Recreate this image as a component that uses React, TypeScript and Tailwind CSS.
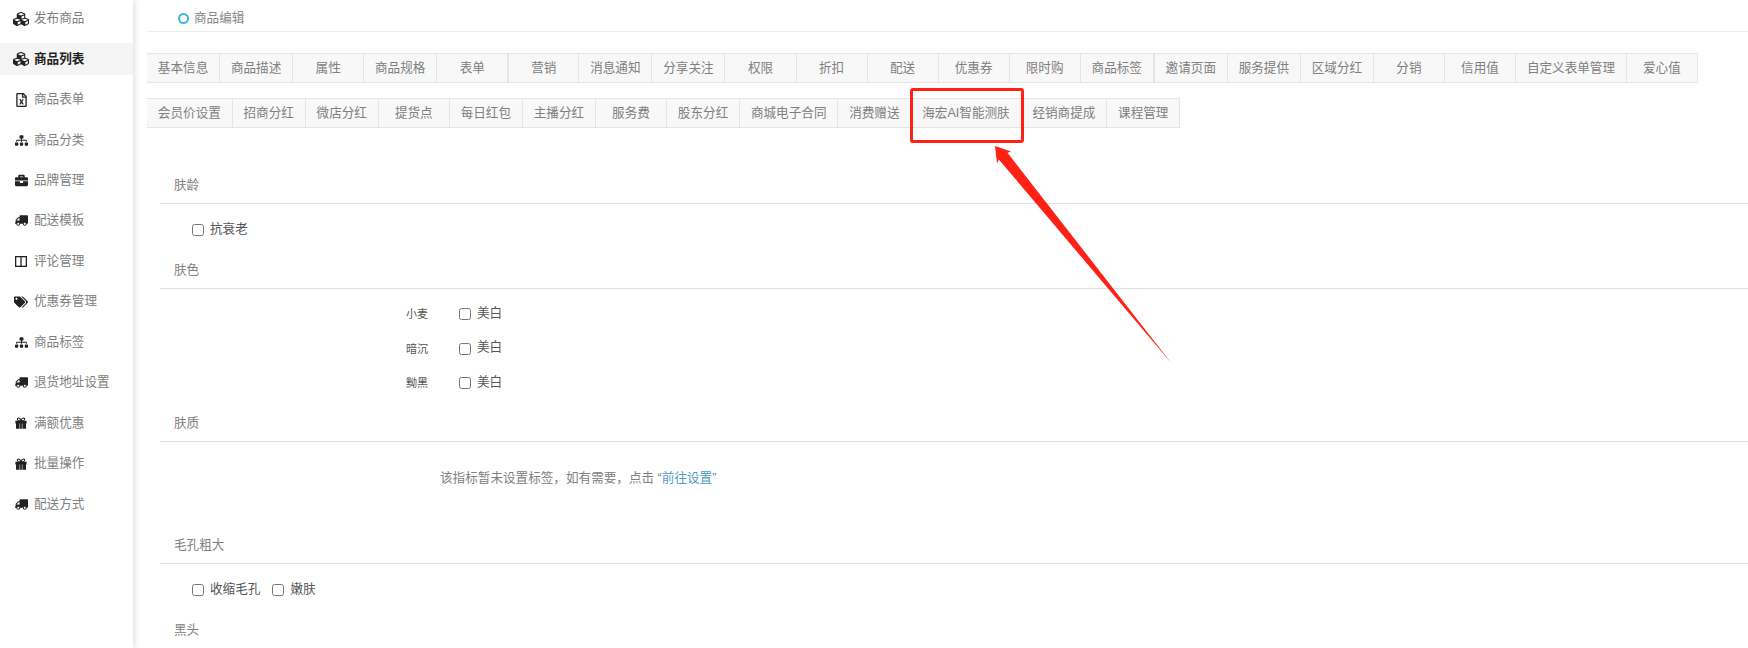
import {
  FaBriefcase,
  FaCubes,
  FaRegFileExcel,
  FaSitemap,
  FaTags,
  FaTruck,
} from "react-icons/fa";

function GiftIcon() {
  return (
    <svg className="h-[12px] w-[12px]" viewBox="0 0 12 12" fill="currentColor">
      <path
        fillRule="evenodd"
        d="M3.6 0.4C2.5 0.4 1.8 1.2 1.8 2.1C1.8 3 2.4 3.5 3 3.7H0.4V6.6H1V11.8H4.6V6.6H7.4V11.8H11V6.6H11.6V3.7H9C9.6 3.5 10.2 3 10.2 2.1C10.2 1.2 9.5 0.4 8.4 0.4C7.2 0.4 6.4 1.4 6 2.4C5.6 1.4 4.8 0.4 3.6 0.4ZM3.6 1.5C4.3 1.5 4.8 2.4 5.1 3.2H3.7C3.2 3.2 2.9 2.7 2.9 2.3C2.9 1.9 3.2 1.5 3.6 1.5ZM8.4 1.5C8.8 1.5 9.1 1.9 9.1 2.3C9.1 2.7 8.8 3.2 8.3 3.2H6.9C7.2 2.4 7.7 1.5 8.4 1.5Z"
      />
      <path d="M5.1 3.7H6.9V11.8H5.1Z" />
    </svg>
  );
}

function ColumnsIcon() {
  return (
    <svg className="h-[11px] w-[12px]" viewBox="0 0 12 11" fill="none" stroke="currentColor" strokeWidth="1.3">
      <rect x="0.65" y="0.65" width="10.7" height="9.7" />
      <path d="M6 0.65V10.35" />
    </svg>
  );
}

const menu = [
  { label: "发布商品", icon: <FaCubes className="h-4 w-4" /> },
  { label: "商品列表", icon: <FaCubes className="h-4 w-4" />, active: true },
  { label: "商品表单", icon: <FaRegFileExcel className="h-[14px] w-[11px]" /> },
  { label: "商品分类", icon: <FaSitemap className="h-[13px] w-[13px]" /> },
  { label: "品牌管理", icon: <FaBriefcase className="h-[13px] w-[13px]" /> },
  { label: "配送模板", icon: <FaTruck className="h-[13px] w-[13px] -scale-x-100" /> },
  { label: "评论管理", icon: <ColumnsIcon /> },
  { label: "优惠券管理", icon: <FaTags className="h-[14px] w-[14px]" /> },
  { label: "商品标签", icon: <FaSitemap className="h-[13px] w-[13px]" /> },
  { label: "退货地址设置", icon: <FaTruck className="h-[13px] w-[13px] -scale-x-100" /> },
  { label: "满额优惠", icon: <GiftIcon /> },
  { label: "批量操作", icon: <GiftIcon /> },
  { label: "配送方式", icon: <FaTruck className="h-[13px] w-[13px] -scale-x-100" /> },
];

const tabs = [
  "基本信息", "商品描述", "属性", "商品规格", "表单", "营销", "消息通知", "分享关注", "权限", "折扣",
  "配送", "优惠券", "限时购", "商品标签", "邀请页面", "服务提供", "区域分红", "分销", "信用值",
  "自定义表单管理", "爱心值", "会员价设置", "招商分红", "微店分红", "提货点", "每日红包", "主播分红",
  "服务费", "股东分红", "商城电子合同", "消费赠送", "海宏AI智能测肤", "经销商提成", "课程管理",
];

function SectionTitle({ title }: { title: string }) {
  return (
    <div className="flex h-[37px] items-center border-b border-[#ddd] pl-[14px] text-[12.6px] text-[#808080]">
      {title}
    </div>
  );
}

function Check({ label }: { label: string }) {
  return (
    <label className="flex items-center text-[12.6px] text-[#555]">
      <input type="checkbox" className="h-[12px] w-[12px]" />
      <span className="ml-[6px] -translate-y-px">{label}</span>
    </label>
  );
}

function SkinRow({ name }: { name: string }) {
  return (
    <div className="flex h-[34.5px] items-center">
      <span className="w-[53px] text-[11px] text-[#555]">{name}</span>
      <Check label="美白" />
    </div>
  );
}

export default function App() {
  return (
    <div className="relative flex h-[648px] overflow-hidden bg-white font-['Liberation_Sans','Noto_Sans_CJK_SC',sans-serif]">
      <aside className="flex h-full w-[133px] shrink-0 flex-col gap-[8.47px] bg-white pt-[2.6px] shadow-[2px_0_6px_rgba(0,0,0,0.12)]">
        {menu.map((item) => (
          <div
            key={item.label}
            className={`flex h-[32px] shrink-0 items-center text-[12.6px] ${
              item.active ? "bg-[#f5f5f5] font-bold text-[#222]" : "text-[#808080]"
            }`}
          >
            <span className="flex w-[34px] shrink-0 justify-center pl-[8px] text-[#222]">{item.icon}</span>
            <span className="whitespace-nowrap">{item.label}</span>
          </div>
        ))}
      </aside>

      <main className="min-w-0 flex-1 pl-[14px]">
        <div className="flex h-[32px] items-center border-b border-[#eee] pt-[5px] pl-[31px] text-[12.6px] text-[#888]">
          <span className="mr-[5px] h-[11px] w-[11px] rounded-full border-2 border-[#3db5d8]" />
          商品编辑
        </div>

        <div className="mt-[21px] flex flex-wrap gap-y-[15px]">
          {tabs.map((tab) => (
            <div
              key={tab}
              className={`flex h-[30px] min-w-[71.05px] items-center justify-center border-y border-r border-[#e5e5e5] bg-[#f8f8f8] px-[10.85px] text-[12.6px] whitespace-nowrap text-[#808080] ${
                tab === "营销" || tab === "邀请页面" ? "border-l" : ""
              }`}
            >
              {tab}
            </div>
          ))}
        </div>

        <section className="mt-[39px] pl-[13px]">
          <SectionTitle title="肤龄" />
          <div className="flex h-[48px] items-center pt-[5px] pl-[32px]">
            <Check label="抗衰老" />
          </div>

          <SectionTitle title="肤色" />
          <div className="h-[116px] pt-[8px] pl-[246px]">
            <SkinRow name="小麦" />
            <SkinRow name="暗沉" />
            <SkinRow name="黝黑" />
          </div>

          <SectionTitle title="肤质" />
          <div className="h-[85px] pt-[26px] pl-[280px] text-[12.6px] leading-5 text-[#808080]">
            该指标暂未设置标签，如有需要，点击 “<span className="text-[#4c9cc4]">前往设置</span>”
          </div>

          <SectionTitle title="毛孔粗大" />
          <div className="flex h-[48px] items-center gap-[12px] pt-[5px] pl-[32px]">
            <Check label="收缩毛孔" />
            <Check label="嫩肤" />
          </div>

          <SectionTitle title="黑头" />
        </section>
      </main>

      {/* red annotation over the screenshot */}
      <div className="absolute top-[88px] left-[910px] h-[55px] w-[114px] rounded-[3px] border-[3px] border-[#ff2116]" />
      <svg className="absolute top-0 left-0 h-[648px] w-[1748px]" viewBox="0 0 1748 648" fill="none">
        <path d="M995 146L1011 151.5L1007.5 152.8L1172 364L998.8 159.4L997 163.5Z" fill="#ff2116" />
      </svg>
    </div>
  );
}
